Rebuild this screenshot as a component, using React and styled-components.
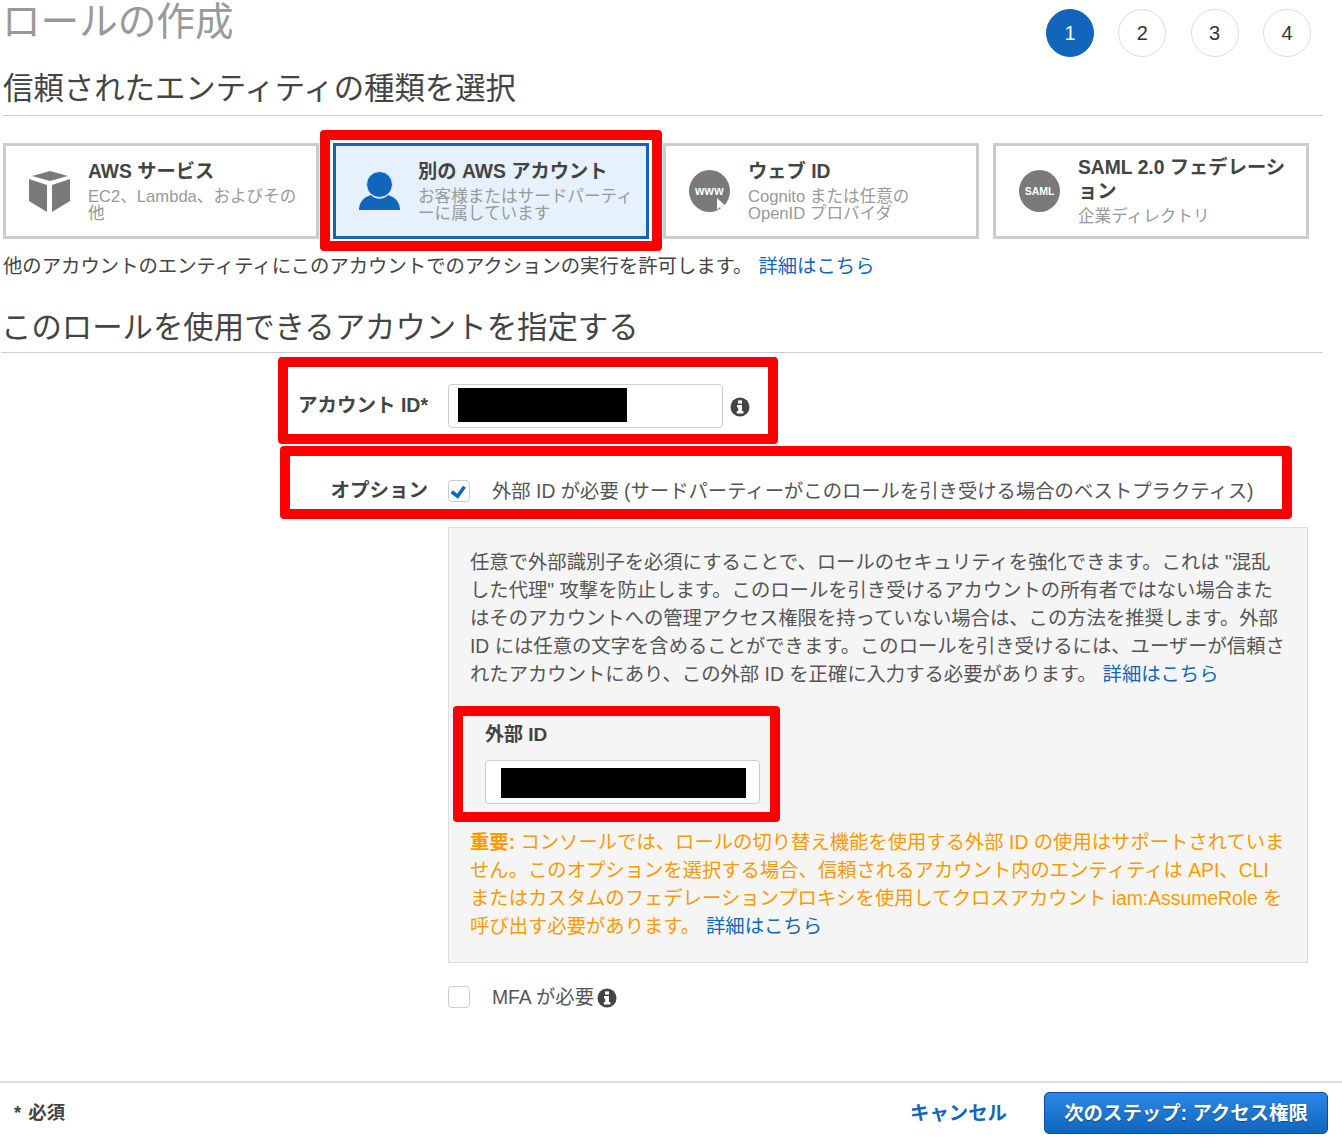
import React from 'react'
import styled, { createGlobalStyle } from 'styled-components'

const GlobalStyle = createGlobalStyle`
  html, body {
    margin: 0;
    padding: 0;
    background: #fff;
  }

  body {
    font-family: "Liberation Sans", "Noto Sans CJK JP", sans-serif;
    color: #444;
  }

  * {
    box-sizing: border-box;
  }
`

const Page = styled.div`
  display: flex;
  flex-direction: column;
  min-height: 1142px;
  overflow: hidden;
`

const Content = styled.div`
  padding: 0 19px 0 3px;
`

const Header = styled.div`
  display: flex;
  justify-content: space-between;
  height: 66px;
`

const Title = styled.h1`
  margin: 0 0 0 -1px;
  font-size: 38.6px;
  font-weight: 400;
  line-height: 44px;
  color: #999;
`

const Steps = styled.div`
  display: flex;
  gap: 24.33px;
  margin: 9px 12px 0 0;
`

const Step = styled.div`
  width: 48px;
  height: 48px;
  display: flex;
  align-items: center;
  justify-content: center;
  border-radius: 50%;
  font-size: 20px;
  color: ${p => (p.$active ? '#fff' : '#333')};
  background: ${p => (p.$active ? '#1166bb' : '#fff')};
  border: 1px solid ${p => (p.$active ? '#1166bb' : '#ddd')};
`

const SectionTitle = styled.h2`
  margin: ${p => p.$top || 0}px 0 0 ${p => p.$left || 0}px;
  padding-bottom: ${p => p.$pad}px;
  font-size: 30.4px;
  font-weight: 400;
  line-height: 44px;
  color: #444;
  border-bottom: 1px solid #ccc;
`

const Cards = styled.div`
  display: flex;
  gap: 14px;
  margin-top: 27px;
`

const Card = styled.div`
  position: relative;
  width: 316px;
  height: 96px;
  display: flex;
  align-items: center;
  gap: 18px;
  padding: 0 8px 0 23px;
  border: 3px solid ${p => (p.$selected ? '#1166bb' : '#ccc')};
  background: ${p => (p.$selected ? '#e5f1fc' : '#fff')};
`

const CardIcon = styled.svg`
  flex: none;
  width: 41px;
  height: 52px;
`

const CardText = styled.div`
  min-width: 0;
`

const CardTitle = styled.div`
  font-size: 19.3px;
  font-weight: 700;
  line-height: 24px;
  margin-bottom: 4px;
  color: #444;
`

const CardDesc = styled.div`
  font-size: 16.6px;
  line-height: 17.5px;
  color: #999;
`

const Annotation = styled.div`
  position: absolute;
  top: ${p => p.$top}px;
  right: ${p => p.$right}px;
  bottom: ${p => p.$bottom}px;
  left: ${p => p.$left}px;
  border: 10px solid #f00;
  border-radius: 4px;
  pointer-events: none;
`

const Intro = styled.p`
  margin: 13px 0 0;
  font-size: 19.38px;
  line-height: 28px;
  color: #444;
`

const Link = styled.a`
  color: #1166bb;
  text-decoration: none;
  margin-left: 6px;
`

const Row = styled.div`
  position: relative;
  display: grid;
  grid-template-columns: 425px 1fr;
  column-gap: 20px;
  align-items: center;
  margin-top: ${p => p.$top}px;
`

const RowLabel = styled.label`
  padding-bottom: 2px;
  font-size: 19.5px;
  font-weight: 700;
  line-height: 26px;
  text-align: right;
  color: #444;
`

const FieldLine = styled.div`
  display: flex;
  align-items: center;
  gap: 7px;
`

const InputBox = styled.div`
  width: 275px;
  height: 44px;
  padding: ${p => p.$padTop}px 0 0 ${p => p.$pad}px;
  background: #fff;
  border: 1px solid #ccc;
  border-radius: 4px;
`

const Redaction = styled.div`
  width: ${p => p.$width}px;
  height: ${p => p.$height}px;
  background: #000;
`

const InfoSvg = styled.svg`
  flex: none;
  width: 20px;
  height: 20px;
  margin: ${p => p.$margin || '0'};
`

const CheckLine = styled.div`
  display: flex;
  align-items: flex-start;
  min-height: 28px;
  padding-top: 2px;
  font-size: 19.33px;
  line-height: 26px;
  color: #555;
`

const Check = styled.div`
  flex: none;
  width: 22px;
  height: 22px;
  margin: 1px 22px 0 0;
  background: #fff;
  border: 1px solid #ccc;
  border-radius: 4px;
`

const Panel = styled.div`
  grid-column: 2;
  margin-right: 15px;
  padding: 21px 19px 21px 21px;
  background: #f5f5f5;
  border: 1px solid #ddd;
  font-size: 19.33px;
  line-height: 28px;
  color: #555;
`

const PanelText = styled.p`
  margin: 0;
`

const ExternalField = styled.div`
  position: relative;
  width: 275px;
  margin: 31px 0 25px 15px;
`

const ExternalLabel = styled.div`
  height: 29px;
  margin-bottom: 11px;
  padding-top: 1px;
  font-size: 19px;
  font-weight: 700;
  line-height: 28px;
  color: #444;
`

const Warning = styled.p`
  margin: 0;
  color: #f90;
`

const Footer = styled.footer`
  margin-top: auto;
  height: 61px;
  display: flex;
  align-items: center;
  padding: 0 14px;
  border-top: 2px solid #ddd;
`

const Required = styled.div`
  flex: 1;
  padding-bottom: 4px;
  font-size: 18.4px;
  font-weight: 700;
  word-spacing: 2px;
  color: #444;
`

const Cancel = styled.a`
  margin-right: 37px;
  padding-bottom: 2px;
  font-size: 19.4px;
  font-weight: 700;
  color: #1166bb;
`

const NextButton = styled.button`
  width: 284px;
  height: 42px;
  padding: 0 0 2px;
  font: 700 19.4px "Liberation Sans", "Noto Sans CJK JP", sans-serif;
  color: #fff;
  text-shadow: 0 1px 1px rgba(0, 0, 0, 0.4);
  background: linear-gradient(#2a87e8, #1166bb);
  border: 1px solid #0d5096;
  border-radius: 5px;
`

const CubeIcon = () => (
  <CardIcon viewBox="0 0 41 52">
    <polygon points="21,6 39,11 21,16 3,11" fill="#7a7a7a" />
    <polygon points="0,14 18,20 18,47 0,36" fill="#7a7a7a" />
    <polygon points="41,14 23,20 23,47 41,36" fill="#7a7a7a" />
  </CardIcon>
)

const UserIcon = () => (
  <CardIcon viewBox="0 0 41 52">
    <path d="M0 45 C0 37 5 32 12 30 C16 35 25 35 29 30 C36 32 41 37 41 45 Z" fill="#1166bb" />
    <circle cx="20.5" cy="19.5" r="13" fill="#1166bb" stroke="#e5f1fc" strokeWidth="1" />
  </CardIcon>
)

const WebIcon = () => (
  <CardIcon viewBox="0 0 41 52">
    <ellipse cx="20.5" cy="26" rx="20.5" ry="21" fill="#7a7a7a" />
    <text x="20.5" y="30" textAnchor="middle" fontSize="12" fontWeight="700" letterSpacing="0.4" fill="#fff" fontFamily="Liberation Sans">www</text>
    <path d="M28 33 L28 45 L31 42 L33.5 46.5 L35.5 45.5 L33 41.5 L37 41.5 Z" fill="#fff" />
  </CardIcon>
)

const SamlIcon = () => (
  <CardIcon viewBox="0 0 41 52">
    <ellipse cx="20.5" cy="26" rx="20.5" ry="21" fill="#7a7a7a" />
    <text x="20.5" y="30" textAnchor="middle" fontSize="10.5" fontWeight="700" fill="#fff" fontFamily="Liberation Sans">SAML</text>
  </CardIcon>
)

const CheckMark = () => (
  <svg width="20" height="20" viewBox="0 0 20 20" style={{ display: 'block' }}>
    <path d="M2.6 10.8 L8.6 15.2 L15.4 5.8" fill="none" stroke="#1166bb" strokeWidth="3.6" />
  </svg>
)

const InfoIcon = ({ margin }) => (
  <InfoSvg viewBox="0 0 20 20" $margin={margin}>
    <circle cx="10" cy="10" r="9.5" fill="#444" />
    <rect x="8" y="3.4" width="4" height="3.2" fill="#fff" />
    <path d="M7 8 H12 V14 H13.4 V16.6 H6.8 V14 H8.2 V10.4 H7 Z" fill="#fff" />
  </InfoSvg>
)

export default function App() {
  return (
    <Page>
      <GlobalStyle />
      <Content>
        <Header>
          <Title>ロールの作成</Title>
          <Steps>
            <Step $active>1</Step>
            <Step>2</Step>
            <Step>3</Step>
            <Step>4</Step>
          </Steps>
        </Header>

        <SectionTitle $pad={5}>信頼されたエンティティの種類を選択</SectionTitle>

        <Cards>
          <Card>
            <CubeIcon />
            <CardText>
              <CardTitle>AWS サービス</CardTitle>
              <CardDesc>EC2、Lambda、およびその他</CardDesc>
            </CardText>
          </Card>
          <Card $selected>
            <UserIcon />
            <CardText>
              <CardTitle>別の AWS アカウント</CardTitle>
              <CardDesc>お客様またはサードパーティーに属しています</CardDesc>
            </CardText>
            <Annotation $top={-16} $right={-16} $bottom={-15} $left={-16} />
          </Card>
          <Card>
            <WebIcon />
            <CardText>
              <CardTitle>ウェブ ID</CardTitle>
              <CardDesc>Cognito または任意の<br />OpenID プロバイダ</CardDesc>
            </CardText>
          </Card>
          <Card>
            <SamlIcon />
            <CardText>
              <CardTitle>SAML 2.0 フェデレーション</CardTitle>
              <CardDesc>企業ディレクトリ</CardDesc>
            </CardText>
          </Card>
        </Cards>

        <Intro>
          他のアカウントのエンティティにこのアカウントでのアクションの実行を許可します。
          <Link>詳細はこちら</Link>
        </Intro>

        <SectionTitle $top={25} $left={-2} $pad={3}>このロールを使用できるアカウントを指定する</SectionTitle>

        <Row $top={31}>
          <RowLabel>アカウント ID*</RowLabel>
          <FieldLine>
            <InputBox $pad={9} $padTop={3}>
              <Redaction $width={169} $height={34} />
            </InputBox>
            <InfoIcon margin="2px 0 0 0" />
          </FieldLine>
          <Annotation $top={-27} $right={545} $bottom={-16} $left={275} />
        </Row>

        <Row $top={49}>
          <RowLabel>オプション</RowLabel>
          <CheckLine>
            <Check><CheckMark /></Check>
            外部 ID が必要 (サードパーティーがこのロールを引き受ける場合のベストプラクティス)
          </CheckLine>
          <Annotation $top={-31} $right={31} $bottom={-14} $left={277} />
        </Row>

        <Row $top={22}>
          <Panel>
            <PanelText>
              任意で外部識別子を必須にすることで、ロールのセキュリティを強化できます。これは "混乱した代理" 攻撃を防止します。このロールを引き受けるアカウントの所有者ではない場合またはそのアカウントへの管理アクセス権限を持っていない場合は、この方法を推奨します。外部 ID には任意の文字を含めることができます。このロールを引き受けるには、ユーザーが信頼されたアカウントにあり、この外部 ID を正確に入力する必要があります。
              <Link>詳細はこちら</Link>
            </PanelText>
            <ExternalField>
              <ExternalLabel>外部 ID</ExternalLabel>
              <InputBox $pad={15} $padTop={7}>
                <Redaction $width={245} $height={30} />
              </InputBox>
              <Annotation $top={-14} $right={-20} $bottom={-18} $left={-32} />
            </ExternalField>
            <Warning>
              <strong>重要:</strong> コンソールでは、ロールの切り替え機能を使用する外部 ID の使用はサポートされていません。このオプションを選択する場合、信頼されるアカウント内のエンティティは API、CLI またはカスタムのフェデレーションプロキシを使用してクロスアカウント iam:AssumeRole を呼び出す必要があります。
              <Link>詳細はこちら</Link>
            </Warning>
          </Panel>
        </Row>

        <Row $top={20}>
          <div />
          <CheckLine>
            <Check />
            MFA が必要
            <InfoIcon margin="3px 0 0 3px" />
          </CheckLine>
        </Row>
      </Content>

      <Footer>
        <Required>* 必須</Required>
        <Cancel>キャンセル</Cancel>
        <NextButton>次のステップ: アクセス権限</NextButton>
      </Footer>
    </Page>
  )
}
